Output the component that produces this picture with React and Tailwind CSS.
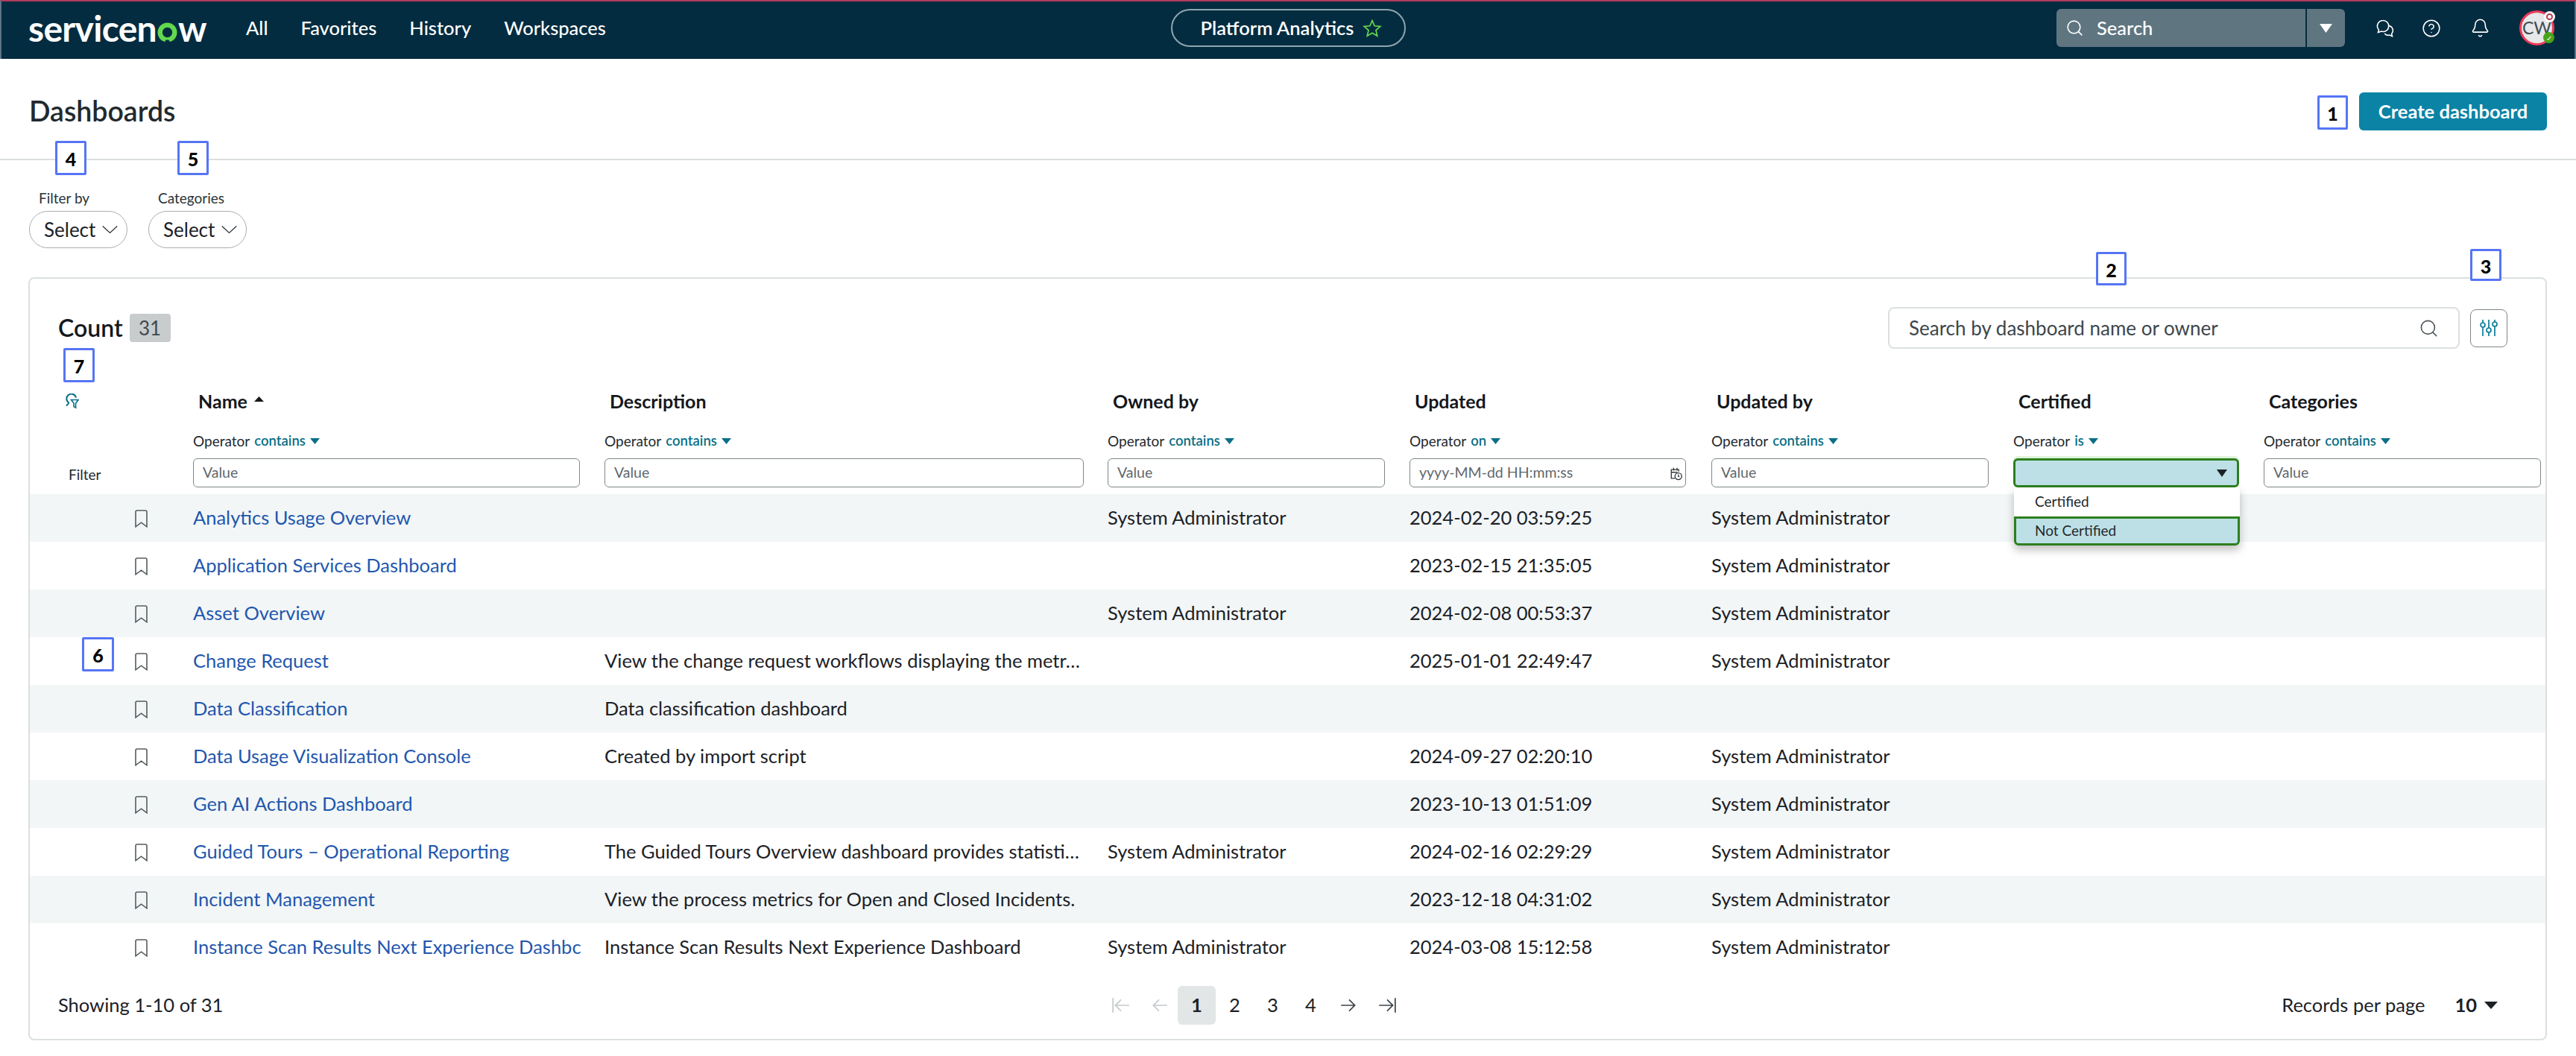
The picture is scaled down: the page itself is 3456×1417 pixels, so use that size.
import React from "react";
import { Bell, CircleHelp, Search } from "lucide-react";

const COLS = "grid grid-cols-[219px_552px_675px_405px_405px_405px_336px_378px]";
const SA = "System Administrator";

const ROWS = [
  ["Analytics Usage Overview", "", SA, "2024-02-20 03:59:25", SA],
  ["Application Services Dashboard", "", "", "2023-02-15 21:35:05", SA],
  ["Asset Overview", "", SA, "2024-02-08 00:53:37", SA],
  ["Change Request", "View the change request workflows displaying the metr…", "", "2025-01-01 22:49:47", SA],
  ["Data Classification", "Data classification dashboard", "", "", ""],
  ["Data Usage Visualization Console", "Created by import script", "", "2024-09-27 02:20:10", SA],
  ["Gen AI Actions Dashboard", "", "", "2023-10-13 01:51:09", SA],
  ["Guided Tours – Operational Reporting", "The Guided Tours Overview dashboard provides statisti…", SA, "2024-02-16 02:29:29", SA],
  ["Incident Management", "View the process metrics for Open and Closed Incidents.", "", "2023-12-18 04:31:02", SA],
  ["Instance Scan Results Next Experience Dashbc", "Instance Scan Results Next Experience Dashboard", SA, "2024-03-08 15:12:58", SA],
];

const HEADERS = ["Description", "Owned by", "Updated", "Updated by", "Certified", "Categories"];

function Tri({ className, up }) {
  return (
    <svg viewBox="0 0 10 8" className={className} fill="currentColor" preserveAspectRatio="none" aria-hidden="true">
      <path d={up ? "M5 0 10 8H0Z" : "M0 0H10L5 8Z"} />
    </svg>
  );
}

function Tag({ n, className }) {
  return (
    <div className={`absolute flex items-center justify-center rounded-[2px] border-[3px] border-[#5675f5] bg-white pt-[4px] text-[25px] font-black text-black ${className}`}>
      {n}
    </div>
  );
}

function Logo() {
  return (
    <div className="flex items-baseline text-[48px] leading-none font-bold tracking-[-0.7px] text-white">
      <span>servicen</span>
      <svg viewBox="0 0 28 28" className="mx-[1px] mt-[11px] h-[27px] w-[27px] self-center" aria-hidden="true">
        <circle cx="14" cy="14" r="10.2" fill="none" stroke="#62d84e" strokeWidth="6.6" />
        <path d="M10 28 12 24.4H16L18 28Z" fill="#042c40" />
      </svg>
      <span>w</span>
    </div>
  );
}

function ChatIcon() {
  return (
    <svg viewBox="0 0 26 26" className="h-[26px] w-[26px]" fill="none" stroke="white" strokeWidth="1.6" aria-hidden="true">
      <path d="M10 2.5a7.5 7.5 0 0 0-5.6 12.5L3.5 18.5l4.4-1.4A7.5 7.5 0 1 0 10 2.5Z" />
      <path d="M17.6 9.6a6.3 6.3 0 0 1 4 10.6l.8 3.4-3.7-1.5a6.3 6.3 0 0 1-6.5-2" />
    </svg>
  );
}

function Bookmark() {
  return (
    <svg viewBox="0 0 17 24" className="h-[24px] w-[17px]" fill="none" stroke="#555d61" strokeWidth="1.6" aria-hidden="true">
      <path d="M1 3a2 2 0 0 1 2-2h11a2 2 0 0 1 2 2v19.8l-7.5-5.6L1 22.8Z" />
    </svg>
  );
}

function FilterSearchIcon() {
  return (
    <svg viewBox="0 0 18 21" className="h-[21px] w-[18px]" fill="none" stroke="#0a6f87" strokeWidth="2" aria-hidden="true">
      <path d="M4.6 12.6A6.4 6.4 0 1 1 14 5.6" />
      <path d="M4.6 12.6 1 16.6" />
      <path d="M7.5 8.5h9.6l-3.5 4.6v6l-2.6-1.6v-4.4Z" strokeWidth="1.6" />
    </svg>
  );
}

function SlidersIcon() {
  return (
    <svg viewBox="0 0 24 24" className="h-[24px] w-[24px]" fill="none" stroke="#0a7c9b" strokeWidth="1.7" aria-hidden="true">
      <path d="M4 1v4M4 11v12M12 1v11M12 18v5M20 1v3M20 10v13" />
      <circle cx="4" cy="8" r="3" />
      <circle cx="12" cy="15" r="3" />
      <circle cx="20" cy="7" r="3" />
    </svg>
  );
}

function DateIcon() {
  return (
    <svg viewBox="0 0 20 22" className="h-[21px] w-[18px]" fill="none" stroke="#30373b" strokeWidth="1.5" aria-hidden="true">
      <path d="M8 18H2.5V5h11v3M2.5 9h9M6 2.5v4M11 2.5v4" />
      <circle cx="13" cy="15" r="5" />
      <path d="M13 12.5V15l1.6 1" />
    </svg>
  );
}

function Arrow({ left, bar, dim }) {
  const stroke = dim ? "#c4c9cb" : "#3d4549";
  return (
    <svg viewBox="0 0 24 24" className="h-[26px] w-[26px]" fill="none" stroke={stroke} strokeWidth="1.6" aria-hidden="true">
      {left ? (
        <>
          <path d="M22 12H6M12 5l-7 7 7 7" />
          {bar && <path d="M2 3v18" />}
        </>
      ) : (
        <>
          <path d="M2 12h16M12 5l7 7-7 7" />
          {bar && <path d="M22 3v18" />}
        </>
      )}
    </svg>
  );
}

function Nav() {
  return (
    <header className="flex h-[79px] items-center border-t-2 border-r-2 border-l-2 border-t-[#b03a5b] border-r-[#5a7383] border-l-[#5a7383] bg-[#042c40] pb-[6px] text-white">
      <div className="flex flex-1 items-center">
        <div className="ml-[36px] w-[292px]">
          <Logo />
        </div>
        <nav className="flex gap-[44px] text-[25.5px] font-medium">
          <span>All</span>
          <span>Favorites</span>
          <span>History</span>
          <span>Workspaces</span>
        </nav>
      </div>
      <div className="flex h-[51px] w-[315px] items-center gap-[12px] rounded-full border-2 border-[#8fa5af] pl-[38px] text-[25.5px] font-semibold">
        <span>Platform Analytics</span>
        <svg viewBox="0 0 24 24" className="h-[26px] w-[26px]" fill="none" stroke="#62d84e" strokeWidth="1.6" aria-hidden="true">
          <path d="M12 2.5 14.9 9l7.1.7-5.4 4.7 1.6 7L12 17.7l-6.2 3.7 1.6-7L2 9.7 9.1 9Z" />
        </svg>
      </div>
      <div className="flex flex-1 items-center justify-end">
        <div className="flex h-[51px] w-[387px] rounded-[6px] bg-[#5f7681]">
          <div className="flex w-[336px] items-center gap-[17px] border-r-2 border-[#042c40] pl-[12px] text-[25.5px] font-medium">
            <Search className="h-[25px] w-[25px]" strokeWidth={1.5} />
            <span>Search</span>
          </div>
          <div className="flex flex-1 items-center justify-center">
            <Tri className="h-[12px] w-[17px]" />
          </div>
        </div>
        <div className="ml-[41px] flex w-[26px] justify-center">
          <ChatIcon />
        </div>
        <CircleHelp className="ml-[36px] h-[26px] w-[26px]" strokeWidth={1.4} />
        <Bell className="ml-[39px] h-[27px] w-[27px]" strokeWidth={1.4} />
        <div className="relative mr-[27px] ml-[39px] flex h-[47px] w-[47px] items-center justify-center rounded-full border-[3px] border-[#ee3a58] bg-[#e6e8e9] text-[23px] text-[#3f4c53]">
          CW
          <span className="absolute top-[-2px] right-[-4px] flex h-[15px] w-[15px] items-center justify-center rounded-full bg-white">
            <span className="h-[9px] w-[9px] rounded-full border-2 border-[#b8384f]" />
          </span>
          <span className="absolute right-[-3px] bottom-[0px] flex h-[15px] w-[15px] items-center justify-center rounded-full bg-[#4aa31a] text-[10px] leading-none text-white">
            ✓
          </span>
        </div>
      </div>
    </header>
  );
}

function FilterPill({ label }) {
  return (
    <div className="flex w-[132px] flex-col">
      <span className="ml-[13px] h-[29px] text-[19px] leading-[24px] text-[#2b3338]">{label}</span>
      <div className="flex h-[50px] items-center gap-[9px] rounded-full border border-[#a8adb0] pl-[19px] text-[26px] text-[#1c2126]">
        <span>Select</span>
        <svg viewBox="0 0 26 14" className="h-[12px] w-[21px]" fill="none" stroke="#2b3338" strokeWidth="1.6" aria-hidden="true">
          <path d="M1 1.5 13 12.5 25 1.5" />
        </svg>
      </div>
    </div>
  );
}

function Operator({ value }) {
  return (
    <div className="flex h-[24px] items-center gap-[6px] text-[19px] text-[#23292d]">
      <span>Operator</span>
      <span className="flex items-center gap-[6px] text-[18.5px] font-semibold text-[#0a6f87]">
        {value}
        <Tri className="h-[8px] w-[13px]" />
      </span>
    </div>
  );
}

function ValueInput({ children, placeholder = "Value", w }) {
  return (
    <div className={`relative flex h-[39px] items-center rounded-[6px] border border-[#7f8689] bg-white pb-[2px] pl-[12px] text-[19.5px] text-[#5f686d] ${w}`}>
      {placeholder}
      {children}
    </div>
  );
}

function CertifiedFilter() {
  return (
    <div className="relative w-[303px]">
      <div className="flex h-[39px] items-center justify-end rounded-[6px] border-[3px] border-[#2d7f1f] bg-[#bde0e6] pr-[13px] text-[#1c2126] shadow-[0_-3px_0_#dff3d8]">
        <Tri className="h-[10px] w-[14px]" />
      </div>
      <div className="absolute top-[39px] left-[1px] z-10 w-[303px] rounded-b-[6px] bg-white text-[19px] text-[#23292d] shadow-[0_6px_12px_rgba(0,0,0,0.25)]">
        <div className="flex h-[39px] items-center pl-[28px]">Certified</div>
        <div className="flex h-[39px] items-center rounded-b-[6px] border-[3px] border-[#2d7f1f] bg-[#bde0e6] pl-[25px]">Not Certified</div>
      </div>
    </div>
  );
}

function TableHead() {
  return (
    <div className="mt-[52px] pb-[9px]">
      <div className={`${COLS} h-[36px] items-center text-[25px] font-bold text-[#15181c]`}>
        <div className="pl-[48px]">
          <FilterSearchIcon />
        </div>
        <div className="flex items-center gap-[9px] pl-[7px]">
          Name
          <Tri className="mb-[6px] h-[7px] w-[13px]" up />
        </div>
        {HEADERS.map((h) => (
          <div key={h} className="pl-[7px]">{h}</div>
        ))}
      </div>
      <div className={`${COLS} mt-[24px]`}>
        <div />
        <Operator value="contains" />
        <Operator value="contains" />
        <Operator value="contains" />
        <Operator value="on" />
        <Operator value="contains" />
        <Operator value="is" />
        <Operator value="contains" />
      </div>
      <div className={`${COLS} mt-[11px]`}>
        <div className="flex items-center pt-[6px] pl-[52px] text-[19px] text-[#23292d]">Filter</div>
        <ValueInput w="w-[519px]" />
        <ValueInput w="w-[643px]" />
        <ValueInput w="w-[372px]" />
        <ValueInput w="w-[371px]" placeholder="yyyy-MM-dd HH:mm:ss">
          <span className="absolute top-[9px] right-[3px]">
            <DateIcon />
          </span>
        </ValueInput>
        <ValueInput w="w-[372px]" />
        <CertifiedFilter />
        <ValueInput w="w-[372px]" />
      </div>
    </div>
  );
}

function Row({ row, i }) {
  const [name, desc, owner, updated, by] = row;
  return (
    <div className={`${COLS} h-[64px] items-center pb-[2px] text-[25.5px] text-[#1c2126] ${i % 2 === 0 ? "bg-[#f2f6f7]" : "bg-white"}`}>
      <div className="pt-[3px] pl-[141px]">
        <Bookmark />
      </div>
      <div className="whitespace-nowrap text-[#1f57ae]">{name}</div>
      <div className="whitespace-nowrap">{desc}</div>
      <div>{owner}</div>
      <div>{updated}</div>
      <div>{by}</div>
      <div />
      <div />
    </div>
  );
}

function Footer() {
  return (
    <div className="flex h-[91px] items-center pr-[64px] pl-[38px] text-[25.5px] text-[#1c2126]">
      <div className="w-[1400px]">Showing 1-10 of 31</div>
      <div className="flex items-center">
        <div className="flex w-[51px] justify-center"><Arrow left bar dim /></div>
        <div className="flex w-[51px] justify-center"><Arrow left dim /></div>
        <div className="flex h-[52px] w-[51px] items-center justify-center rounded-[6px] bg-[#e2e6e7] font-bold">1</div>
        <div className="flex w-[51px] justify-center">2</div>
        <div className="flex w-[51px] justify-center">3</div>
        <div className="flex w-[51px] justify-center">4</div>
        <div className="flex w-[51px] justify-center"><Arrow /></div>
        <div className="flex w-[51px] justify-center"><Arrow bar /></div>
      </div>
      <div className="ml-auto flex items-center">
        <span>Records per page</span>
        <span className="ml-[40px] font-bold">10</span>
        <Tri className="ml-[10px] h-[10px] w-[18px]" />
      </div>
    </div>
  );
}

export default function App() {
  return (
    <div className="relative min-h-[1417px] bg-white font-[Lato,sans-serif]">
      <Nav />
      <div className="h-[136px] border-b-2 border-[#dcdfe0] pt-[45px] pr-[39px] pl-[39px]">
        <div className="flex h-[51px] items-center justify-between">
          <h1 className="text-[37.5px] font-semibold text-[#22292e]">Dashboards</h1>
          <button className="h-[51px] w-[252px] rounded-[6px] bg-[#0b83a5] text-[25.5px] font-bold text-white">Create dashboard</button>
        </div>
      </div>
      <div className="flex gap-[28px] pt-[39px] pl-[39px]">
        <FilterPill label="Filter by" />
        <FilterPill label="Categories" />
      </div>
      <section className="mt-[39px] mr-[39px] ml-[38px] rounded-[8px] border-2 border-[#dcdfe0]">
        <div className="mt-[38px] flex h-[56px] items-center pr-[51px] pl-[38px]">
          <span className="text-[32px] font-semibold text-[#15181c]">Count</span>
          <span className="ml-[9px] flex h-[38px] w-[55px] items-center justify-center rounded-[4px] bg-[#c8cccd] text-[26px] text-[#3f4a50]">31</span>
          <div className="ml-auto flex h-[56px] w-[767px] items-center justify-between rounded-[8px] border-2 border-[#dcdfe0] pr-[26px] pl-[26px] text-[26px] text-[#3d474c]">
            <span>Search by dashboard name or owner</span>
            <Search className="h-[27px] w-[27px] text-[#4a5257]" strokeWidth={1.4} />
          </div>
          <div className="ml-[14px] flex h-[51px] w-[50px] items-center justify-center rounded-[8px] border border-[#7f8689]">
            <SlidersIcon />
          </div>
        </div>
        <TableHead />
        {ROWS.map((r, i) => (
          <Row key={r[0]} row={r} i={i} />
        ))}
        <Footer />
      </section>
      <Tag n={1} className="top-[128px] left-[3109px] h-[46px] w-[41px]" />
      <Tag n={2} className="top-[338px] left-[2812px] h-[45px] w-[41px]" />
      <Tag n={3} className="top-[334px] left-[3314px] h-[43px] w-[42px]" />
      <Tag n={4} className="top-[189px] left-[74px] h-[46px] w-[42px]" />
      <Tag n={5} className="top-[189px] left-[238px] h-[46px] w-[42px]" />
      <Tag n={6} className="top-[855px] left-[110px] h-[46px] w-[43px]" />
      <Tag n={7} className="top-[467px] left-[85px] h-[46px] w-[42px]" />
    </div>
  );
}
